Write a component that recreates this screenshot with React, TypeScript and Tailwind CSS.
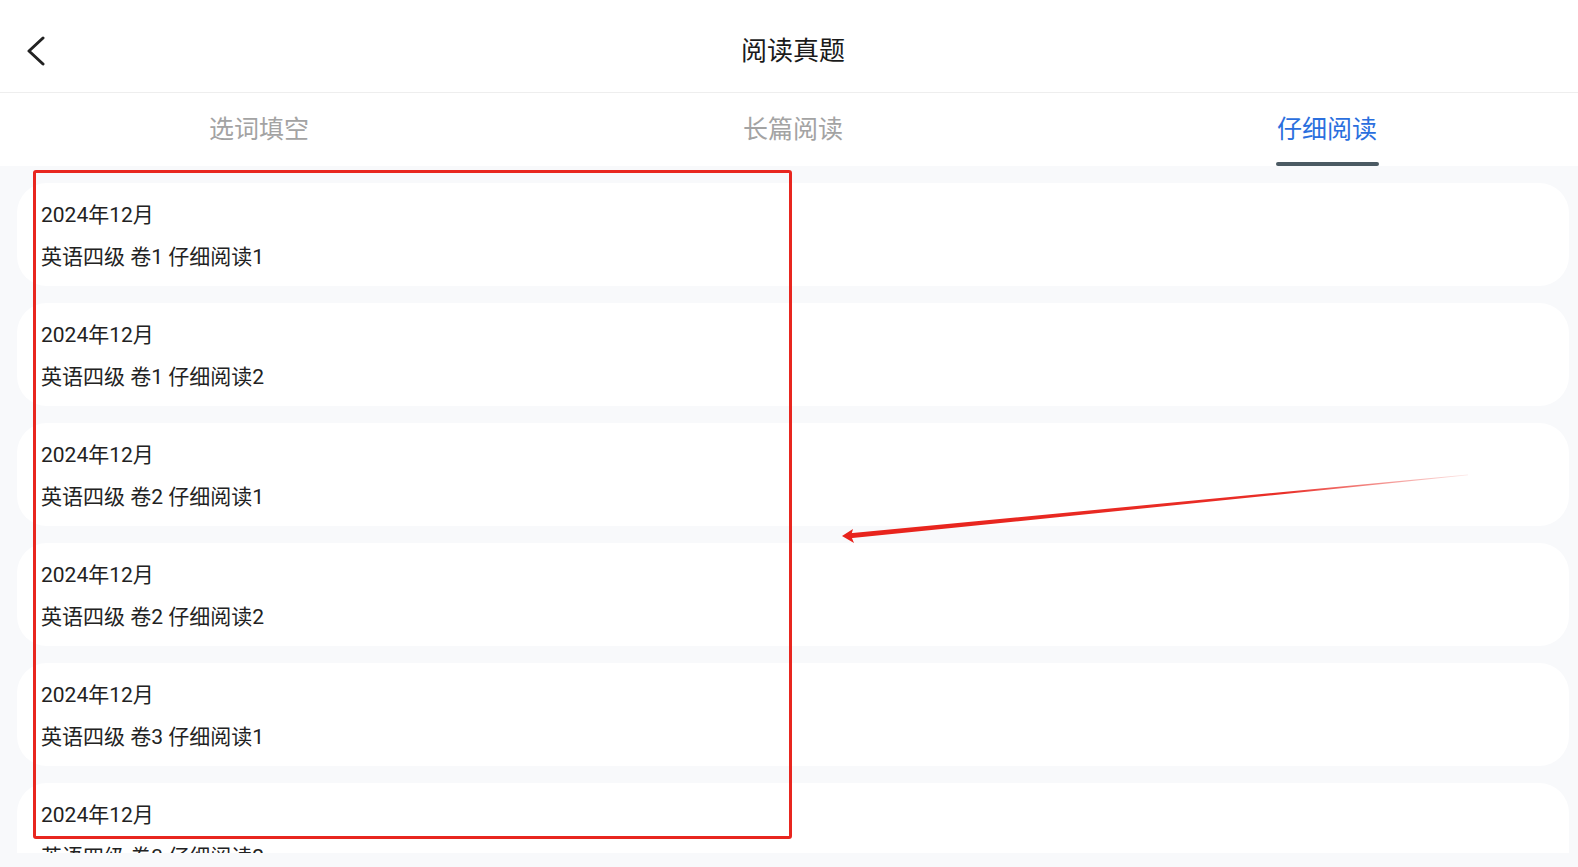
import React from "react";

const items = [
  { date: "2024年12月", title: "英语四级 卷1 仔细阅读1" },
  { date: "2024年12月", title: "英语四级 卷1 仔细阅读2" },
  { date: "2024年12月", title: "英语四级 卷2 仔细阅读1" },
  { date: "2024年12月", title: "英语四级 卷2 仔细阅读2" },
  { date: "2024年12月", title: "英语四级 卷3 仔细阅读1" },
  { date: "2024年12月", title: "英语四级 卷3 仔细阅读2" },
];

const tabs = ["选词填空", "长篇阅读", "仔细阅读"];

export default function App() {
  return (
    <div
      className="relative w-full h-[867px] overflow-hidden bg-[#f8f9fb] flex flex-col"
      style={{ fontFamily: "Roboto, 'Noto Sans CJK SC', 'Noto Sans', sans-serif" }}
    >
      {/* Header */}
      <div className="h-[93px] shrink-0 bg-white flex items-center pt-[9px] border-b border-[#eeeeee]">
        <div className="w-[72px] flex items-center pl-[26px]">
          <svg width="20" height="30" viewBox="0 0 20 30" fill="none">
            <path d="M17 2 L3 15 L17 28" stroke="#222" strokeWidth="3" strokeLinecap="round" strokeLinejoin="round" />
          </svg>
        </div>
        <div className="flex-1 text-center text-[26px] leading-[36px] text-[#1a1a1a]">阅读真题</div>
        <div className="w-[64px]" />
      </div>

      {/* Tabs */}
      <div className="h-[73px] shrink-0 bg-white overflow-hidden">
        <div className="w-[1602px] -ml-[8px] grid grid-cols-3 h-full">
          {tabs.map((t, i) => (
            <div key={t} className="flex flex-col items-center h-full">
              <div
                className={
                  "pt-[22px] text-[25px] leading-[30px] " +
                  (i === 2 ? "text-[#2b6fde]" : "text-[#a3a3a3]")
                }
              >
                {t}
              </div>
              {i === 2 && <div className="mt-auto w-[103px] h-[4px] rounded-[2px] bg-[#4b5a63]" />}
            </div>
          ))}
        </div>
      </div>

      {/* List */}
      <div className="h-[687px] shrink-0 overflow-hidden pt-[17px] flex flex-col gap-[17px]">
        {items.map((it, idx) => (
          <div
            key={idx}
            className="ml-[17px] mr-[9px] h-[103px] shrink-0 rounded-[30px] bg-white pt-[11px] pl-[24px] text-[21px] leading-[42px] text-[#222222]"
          >
            <div>{it.date}</div>
            <div>{it.title}</div>
          </div>
        ))}
      </div>

      {/* Annotation: red box */}
      <div className="absolute left-[33px] top-[170px] w-[759px] h-[669px] border-[3px] border-[#e8261f] rounded-[3px] pointer-events-none" />

      {/* Annotation: arrow */}
      <svg
        className="absolute left-0 top-0 pointer-events-none"
        width="1578"
        height="867"
        viewBox="0 0 1578 867"
      >
        <defs>
          <linearGradient id="fade" x1="852" y1="535" x2="1468" y2="475" gradientUnits="userSpaceOnUse">
            <stop offset="0" stopColor="#e8231c" stopOpacity="1" />
            <stop offset="0.7" stopColor="#e8231c" stopOpacity="0.95" />
            <stop offset="1" stopColor="#e8231c" stopOpacity="0.1" />
          </linearGradient>
        </defs>
        <polygon points="850,538.3 850,533.2 1468,474.5 1468,475.3" fill="url(#fade)" />
        <polygon points="842,536 853,529 851,535.8 854,543" fill="#e8231c" />
      </svg>
    </div>
  );
}
